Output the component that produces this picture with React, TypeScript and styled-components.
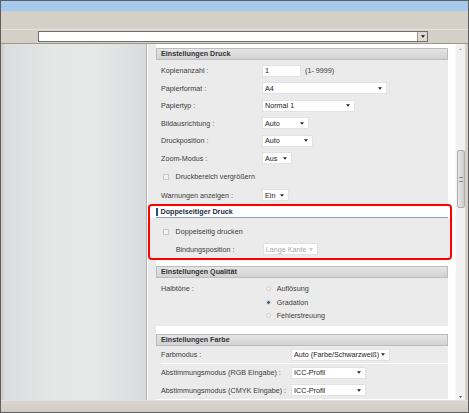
import * as React from 'react';
import styled, { createGlobalStyle } from 'styled-components';

const GlobalStyle = createGlobalStyle`
  html, body {
    margin: 0;
    padding: 0;
    background: #fff;
  }
  body {
    font-family: "Liberation Sans", Arial, sans-serif;
  }
`;

const Window = styled.div`
  width: 469px;
  height: 413px;
  box-sizing: border-box;
  border: 1px solid #5e5e5e;
  background: #d4d0c8;
  display: flex;
  flex-direction: column;
  overflow: hidden;
`;

const TitleBar = styled.div`
  height: 10px;
  background: #a8c9ee;
`;

const Toolbar = styled.div`
  height: 18px;
  background: #d4d0c8;
  border-bottom: 1px solid #e6e3de;
`;

const AddressRow = styled.div`
  height: 13px;
  padding-left: 37px;
  display: flex;
  align-items: center;
  border-bottom: 1px solid #9c9890;
`;

const AddressSelect = styled.div`
  width: 390px;
  height: 11px;
  box-sizing: border-box;
  background: #fff;
  border: 1px solid #6f6f6f;
  display: flex;
  justify-content: flex-end;
`;

const AddressButton = styled.div`
  width: 9px;
  height: 9px;
  background: #dedad3;
  border-left: 1px solid #a09c94;
  display: flex;
  align-items: center;
  justify-content: center;
`;

const Main = styled.div`
  flex: 1;
  display: flex;
  padding: 0 3px;
  min-height: 0;
`;

const Sidebar = styled.div`
  width: 142px;
  background: linear-gradient(to right, #dadddd 0%, #e5e7e7 35%, #e6e8e8 65%, #d9dcdc 100%);
  border-right: 1px solid #b2b2b2;
`;

const Pane = styled.div`
  flex: 1;
  padding: 4px 3px 0 1px;
  background: linear-gradient(to right, #fff 1px, #ebebeb 1px, #ebebeb 9px, #fff 9px);
  display: flex;
  flex-direction: column;
  overflow: hidden;
`;

const Scrollbar = styled.div`
  width: 10px;
  box-sizing: border-box;
  background: #f1f1f1;
  border-left: 1px solid #fafafa;
  display: flex;
  flex-direction: column;
  align-items: center;
`;

const ScrollArrow = styled.div<{ $h: number }>`
  height: ${p => p.$h}px;
  display: flex;
  align-items: center;
  justify-content: center;
`;

const Thumb = styled.div`
  margin-top: 96px;
  width: 8px;
  height: 58px;
  box-sizing: border-box;
  border: 1px solid #adadad;
  border-radius: 2px;
  background: linear-gradient(to right, #e6e6e6, #cdcdcd);
  display: flex;
  align-items: center;
  justify-content: center;
`;

const Grip = styled.div`
  width: 4px;
  height: 3px;
  border-top: 1px solid #8a8a8a;
  border-bottom: 1px solid #8a8a8a;
`;

const ScrollSpacer = styled.div`
  flex: 1;
`;

const BottomBar = styled.div`
  height: 12px;
  box-sizing: border-box;
  border-top: 1px solid #e4e1dc;
  background: linear-gradient(#dad6cf, #cfcbc3);
`;

const Section = styled.div<{ $gap?: number }>`
  margin: ${p => p.$gap || 0}px 4px 0 8px;
`;

const SectionHeader = styled.div`
  height: 12px;
  box-sizing: border-box;
  border: 1px solid #bcbcbc;
  background: linear-gradient(#e5e5e5, #d2d2d2);
  padding-left: 4px;
  font-size: 7.2px;
  font-weight: bold;
  line-height: 10px;
  color: #333;
  white-space: nowrap;
`;

const SectionBody = styled.div<{ $pad: string }>`
  background: #ebebeb;
  padding: ${p => p.$pad};
`;

const Row = styled.div<{ $h?: number; $line?: boolean }>`
  height: ${p => p.$h || 17.5}px;
  display: flex;
  align-items: center;
  box-sizing: border-box;
  border-bottom: ${p => (p.$line ? '1px solid #fdfdfd' : 'none')};
`;

const Label = styled.div<{ $w: number }>`
  width: ${p => p.$w}px;
  flex-shrink: 0;
  font-size: 7.2px;
  color: #3c3c3c;
  white-space: nowrap;
`;

const Text = styled.span<{ $dim?: boolean }>`
  font-size: 7.2px;
  color: ${p => (p.$dim ? '#a8a8a8' : '#3c3c3c')};
  white-space: nowrap;
`;

const SelectBox = styled.div<{ $w: number; $disabled?: boolean }>`
  width: ${p => p.$w}px;
  height: 12px;
  box-sizing: border-box;
  background: #fff;
  border: 1px solid #e2e2e2;
  display: flex;
  align-items: center;
  justify-content: space-between;
  padding: 0 4px 0 2px;
  font-size: 7.2px;
  color: ${p => (p.$disabled ? '#aaa' : '#222')};
  white-space: nowrap;
  overflow: hidden;
`;

const TextBox = styled.div`
  width: 39px;
  height: 12px;
  box-sizing: border-box;
  background: #fff;
  border: 1px solid #e2e2e2;
  padding-left: 2px;
  font-size: 7.2px;
  line-height: 10px;
  color: #222;
`;

const Hint = styled.span`
  margin-left: 4px;
  font-size: 7.2px;
  color: #3c3c3c;
`;

const Checkbox = styled.span`
  width: 6px;
  height: 6px;
  box-sizing: border-box;
  border: 1px solid #c8c8c8;
  background: #f3f3f3;
  margin-right: 6.5px;
  flex-shrink: 0;
`;

const Indent = styled.div<{ $w: number }>`
  width: ${p => p.$w}px;
  flex-shrink: 0;
`;

const Highlight = styled.div`
  margin-top: 0;
  border: 2px solid #f00;
  border-radius: 4px;
  overflow: hidden;
  background: #ebebeb;
`;

const HighlightHeader = styled.div`
  height: 12px;
  background: #fff;
  padding: 0 2px 0 6px;
`;

const HighlightTitle = styled.div`
  height: 12px;
  box-sizing: border-box;
  border-bottom: 1px solid #8ea2b4;
  display: flex;
  align-items: center;
  font-size: 7.2px;
  font-weight: bold;
  color: #1c2a42;
  white-space: nowrap;
`;

const BlueMark = styled.span`
  width: 2px;
  height: 8px;
  background: #23508f;
  margin-right: 2.5px;
`;

const HighlightBody = styled.div`
  padding: 5px 0 0 13px;
  height: 40px;
  box-sizing: border-box;
  background: #ebebeb;
`;

const RadioList = styled.div`
  margin-left: 3.7px;
  display: flex;
  flex-direction: column;
`;

const RadioItem = styled.div`
  height: 13.5px;
  display: flex;
  align-items: center;
`;

const Radio = styled.span<{ $on?: boolean }>`
  width: 5px;
  height: 5px;
  box-sizing: border-box;
  border-radius: 50%;
  border: 1px solid #cfcfcf;
  background: ${p => (p.$on ? 'radial-gradient(circle, #3f5f82 0 1.3px, #f4f4f4 1.6px)' : '#f4f4f4')};
  margin-right: 6px;
  flex-shrink: 0;
`;

const QualityRow = styled.div`
  display: flex;
  align-items: flex-start;
`;

const QualityLabel = styled(Label)`
  height: 13.5px;
  display: flex;
  align-items: center;
`;

function Caret({ color = '#222', w = 5 }: { color?: string; w?: number }) {
  return (
    <svg width={w} height={3} viewBox="0 0 5 3">
      <polygon points="0,0 5,0 2.5,3" fill={color} />
    </svg>
  );
}

function Select({ value, w, disabled }: { value: string; w: number; disabled?: boolean }) {
  return (
    <SelectBox $w={w} $disabled={disabled}>
      <span>{value}</span>
      <Caret w={4} color={disabled ? '#bbb' : '#222'} />
    </SelectBox>
  );
}

const druckRows: [string, string, number][] = [
  ['Papierformat :', 'A4', 125],
  ['Papiertyp :', 'Normal 1', 93],
  ['Bildausrichtung :', 'Auto', 47],
  ['Druckposition :', 'Auto', 51],
  ['Zoom-Modus :', 'Aus', 30],
];

export default function App() {
  return (
    <>
      <GlobalStyle />
      <Window>
        <TitleBar />
        <Toolbar />
        <AddressRow>
          <AddressSelect>
            <AddressButton>
              <Caret w={4} color="#111" />
            </AddressButton>
          </AddressSelect>
        </AddressRow>
        <Main>
          <Sidebar />
          <Pane>
            <Section>
              <SectionHeader>Einstellungen Druck</SectionHeader>
              <SectionBody $pad="2px 0 0 5px">
                <Row>
                  <Label $w={101}>Kopienanzahl :</Label>
                  <TextBox>1</TextBox>
                  <Hint>(1- 9999)</Hint>
                </Row>
                {druckRows.map(([label, value, w]) => (
                  <Row key={label}>
                    <Label $w={101}>{label}</Label>
                    <Select value={value} w={w} />
                  </Row>
                ))}
                <Row $h={19.5}>
                  <Indent $w={2} />
                  <Checkbox />
                  <Text>Druckbereich vergrößern</Text>
                </Row>
                <Row>
                  <Label $w={101}>Warnungen anzeigen :</Label>
                  <Select value="Ein" w={27} />
                </Row>
              </SectionBody>
            </Section>

            <Highlight>
              <HighlightHeader>
                <HighlightTitle>
                  <BlueMark />
                  Doppelseitiger Druck
                </HighlightTitle>
              </HighlightHeader>
              <HighlightBody>
                <Row>
                  <Checkbox />
                  <Text>Doppelseitig drucken</Text>
                </Row>
                <Row>
                  <Indent $w={12.7} />
                  <Label $w={87}>Bindungsposition :</Label>
                  <Select value="Lange Kante" w={55} disabled />
                </Row>
              </HighlightBody>
            </Highlight>

            <Section $gap={6}>
              <SectionHeader>Einstellungen Qualität</SectionHeader>
              <SectionBody $pad="4px 0 3.5px 5px">
                <QualityRow>
                  <QualityLabel $w={101}>Halbtöne :</QualityLabel>
                  <RadioList>
                    <RadioItem>
                      <Radio />
                      <Text>Auflösung</Text>
                    </RadioItem>
                    <RadioItem>
                      <Radio $on />
                      <Text>Gradation</Text>
                    </RadioItem>
                    <RadioItem>
                      <Radio />
                      <Text>Fehlerstreuung</Text>
                    </RadioItem>
                  </RadioList>
                </QualityRow>
              </SectionBody>
            </Section>

            <Section $gap={8}>
              <SectionHeader>Einstellungen Farbe</SectionHeader>
              <SectionBody $pad="0 0 0 5px">
                <Row $h={18} $line>
                  <Label $w={130}>Farbmodus :</Label>
                  <Select value="Auto (Farbe/Schwarzweiß)" w={99} />
                </Row>
                <Row>
                  <Label $w={130}>Abstimmungsmodus (RGB Eingabe) :</Label>
                  <Select value="ICC-Profil" w={75} />
                </Row>
                <Row>
                  <Label $w={130}>Abstimmungsmodus (CMYK Eingabe) :</Label>
                  <Select value="ICC-Profil" w={75} />
                </Row>
              </SectionBody>
            </Section>
          </Pane>
          <Scrollbar>
            <ScrollArrow $h={10}>
              <svg width={3} height={2} viewBox="0 0 3 2">
                <polygon points="0,2 3,2 1.5,0" fill="#b4b4b4" />
              </svg>
            </ScrollArrow>
            <Thumb>
              <Grip />
            </Thumb>
            <ScrollSpacer />
            <ScrollArrow $h={6}>
              <svg width={3} height={2} viewBox="0 0 3 2">
                <polygon points="0,0 3,0 1.5,2" fill="#555" />
              </svg>
            </ScrollArrow>
          </Scrollbar>
        </Main>
        <BottomBar />
      </Window>
    </>
  );
}
